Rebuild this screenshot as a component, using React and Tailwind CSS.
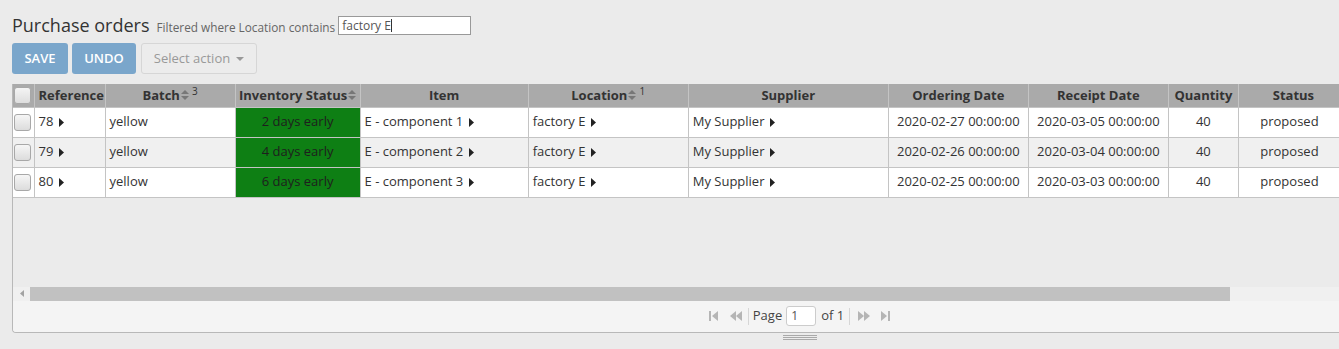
import React from 'react';

const cols = [
  { key: 'chk', w: 21 },
  { key: 'ref', label: 'Reference', w: 71, align: 'left' },
  { key: 'batch', label: 'Batch', w: 130, sort: '3' },
  { key: 'inv', label: 'Inventory Status', w: 125, sort: '' },
  { key: 'item', label: 'Item', w: 168 },
  { key: 'loc', label: 'Location', w: 160, sort: '1' },
  { key: 'sup', label: 'Supplier', w: 200 },
  { key: 'od', label: 'Ordering Date', w: 140 },
  { key: 'rd', label: 'Receipt Date', w: 140 },
  { key: 'qty', label: 'Quantity', w: 70 },
  { key: 'st', label: 'Status', w: 110 },
];

const rows = [
  { ref: '78', inv: '2 days early', item: 'E - component 1', od: '2020-02-27 00:00:00', rd: '2020-03-05 00:00:00' },
  { ref: '79', inv: '4 days early', item: 'E - component 2', od: '2020-02-26 00:00:00', rd: '2020-03-04 00:00:00' },
  { ref: '80', inv: '6 days early', item: 'E - component 3', od: '2020-02-25 00:00:00', rd: '2020-03-03 00:00:00' },
];

const Caret = () => (
  <svg width="5" height="9" viewBox="0 0 5 9" className="inline-block ml-[6px] align-[-1px]">
    <polygon points="0,0 5,4.5 0,9" fill="#222" />
  </svg>
);

const SortIcon = () => (
  <svg width="8" height="10" viewBox="0 0 8 10" className="inline-block ml-[1px] align-[0px]">
    <polygon points="0,4 4,0 8,4" fill="#777" />
    <polygon points="0,6 8,6 4,10" fill="#777" />
  </svg>
);

const Check = ({ light }) => (
  <div
    className={`w-[17px] h-[17px] rounded-[3px] border border-[#a8a8a8] ${
      light ? 'bg-gradient-to-b from-[#f4f4f4] to-[#dedede]' : 'bg-gradient-to-b from-[#f6f6f6] to-[#dcdcdc]'
    }`}
  />
);

const PagerIcon = ({ kind }) => {
  const c = '#b5b5b5';
  if (kind === 'first')
    return (
      <svg width="10" height="12" viewBox="0 0 10 12">
        <rect x="0" y="1" width="2" height="10" fill={c} />
        <polygon points="9,1 3,6 9,11" fill={c} />
      </svg>
    );
  if (kind === 'prev')
    return (
      <svg width="13" height="12" viewBox="0 0 13 12">
        <polygon points="6,1 0,6 6,11" fill={c} />
        <polygon points="12,1 6,6 12,11" fill={c} />
      </svg>
    );
  if (kind === 'next')
    return (
      <svg width="13" height="12" viewBox="0 0 13 12">
        <polygon points="1,1 7,6 1,11" fill={c} />
        <polygon points="7,1 13,6 7,11" fill={c} />
      </svg>
    );
  return (
    <svg width="10" height="12" viewBox="0 0 10 12">
      <polygon points="1,1 7,6 1,11" fill={c} />
      <rect x="8" y="1" width="2" height="10" fill={c} />
    </svg>
  );
};

export default function App() {
  return (
    <div
      className="w-[1339px] h-[349px] overflow-hidden bg-[#ebebeb] text-[#333]"
      style={{ fontFamily: '"Open Sans", "Liberation Sans", sans-serif' }}
    >
      {/* title */}
      <div className="flex items-end pl-[12px] pt-[11px] h-[36px]">
        <span className="text-[18px] leading-[22px] text-[#333]">Purchase orders</span>
        <span className="ml-[7px] text-[11.8px] leading-[18px] text-[#666]">Filtered where Location contains</span>
        <div className="ml-[3px] mb-[1px] w-[133px] h-[19px] bg-white border border-[#999] text-[12px] leading-[17px] pl-[3px] text-[#555]">
          factory E<span className="inline-block w-px h-[13px] bg-[#333] align-[-2px]" />
        </div>
      </div>

      {/* buttons */}
      <div className="flex pl-[12px] pt-[7px] gap-[4px]">
        <button className="w-[56px] h-[31px] rounded-[3px] bg-[#7aa6cb] text-white text-[13px] font-semibold">SAVE</button>
        <button className="w-[64px] h-[31px] rounded-[3px] bg-[#7aa6cb] text-white text-[13px] font-semibold">UNDO</button>
        <button className="ml-[1px] w-[116px] h-[31px] rounded-[3px] bg-[#ececec] border border-[#d6d6d6] text-[#999] text-[13px] flex items-center justify-center gap-[6px]">
          Select action
          <svg width="8" height="4" viewBox="0 0 8 4">
            <polygon points="0,0 8,0 4,4" fill="#999" />
          </svg>
        </button>
      </div>

      {/* grid */}
      <div className="ml-[12px] mt-[10px] w-[1576px] border-l border-b border-[#b8b8b8] rounded-bl-[4px] overflow-hidden">
        <table className="table-fixed border-collapse text-[13px]" style={{ width: 1336 }}>
          <colgroup>
            {cols.map((c) => (
              <col key={c.key} style={{ width: c.w }} />
            ))}
          </colgroup>
          <thead>
            <tr className="h-[23px] bg-[#aaaaaa]">
              {cols.map((c) => (
                <th
                  key={c.key}
                  className={`border-r border-[#c4c4c4] font-bold text-[#333] whitespace-nowrap overflow-hidden p-0 pt-[1px] ${
                    c.align === 'left' ? 'text-left pl-[4px]' : 'text-center'
                  }`}
                >
                  {c.key === 'chk' ? (
                    <div className="pl-[1px]">
                      <Check light />
                    </div>
                  ) : (
                    <>
                      {c.label}
                      {c.sort !== undefined && <SortIcon />}
                      {c.sort && <sup className="text-[10px] ml-[3px] font-normal">{c.sort}</sup>}
                    </>
                  )}
                </th>
              ))}
            </tr>
          </thead>
          <tbody>
            {rows.map((r, i) => (
              <tr key={r.ref} className={`h-[30px] ${i === 1 ? 'bg-[#f0f0f0]' : 'bg-white'}`}>
                <td className="border border-l-0 border-[#c4c4c4] p-0 pl-[1px]">
                  <Check />
                </td>
                <td className="border border-[#c4c4c4] px-[4px] whitespace-nowrap">
                  {r.ref}
                  <Caret />
                </td>
                <td className="border border-[#c4c4c4] px-[4px]">yellow</td>
                <td className="border border-[#c4c4c4] bg-[#0e7f14] text-center text-[#1e1e1e]">{r.inv}</td>
                <td className="border border-[#c4c4c4] px-[4px] whitespace-nowrap">
                  {r.item}
                  <Caret />
                </td>
                <td className="border border-[#c4c4c4] px-[4px] whitespace-nowrap">
                  factory E<Caret />
                </td>
                <td className="border border-[#c4c4c4] px-[4px] whitespace-nowrap">
                  My Supplier<Caret />
                </td>
                <td className="border border-[#c4c4c4] text-center whitespace-nowrap">{r.od}</td>
                <td className="border border-[#c4c4c4] text-center whitespace-nowrap">{r.rd}</td>
                <td className="border border-[#c4c4c4] text-center">40</td>
                <td className="border border-[#c4c4c4] text-center pr-[8px]">proposed</td>
              </tr>
            ))}
          </tbody>
        </table>

        {/* empty area */}
        <div className="h-[89px]" />

        {/* horizontal scrollbar */}
        <div className="h-[14px] flex bg-[#f0f0f0]">
          <div className="w-[17px] flex items-center justify-center">
            <svg width="4" height="7" viewBox="0 0 4 7">
              <polygon points="4,0 0,3.5 4,7" fill="#a3a3a3" />
            </svg>
          </div>
          <div className="w-[1200px] bg-[#c1c1c1]" />
        </div>

        {/* pager */}
        <div className="h-[31px] bg-[#f4f4f4] flex items-center justify-center pr-[2px] text-[13px]">
          <div className="flex items-center">
            <PagerIcon kind="first" />
            <span className="ml-[11px]"><PagerIcon kind="prev" /></span>
            <span className="ml-[5px] w-px h-[17px] bg-[#d6d6d6]" />
            <span className="ml-[4px] text-[#444]">Page</span>
            <div className="ml-[4px] w-[30px] h-[20px] bg-white border border-[#ccc] rounded-[3px] text-[12px] leading-[18px] pl-[4px] text-[#555]">1</div>
            <span className="ml-[5px] text-[#444]">of 1</span>
            <span className="ml-[5px] w-px h-[17px] bg-[#d6d6d6]" />
            <span className="ml-[7px]"><PagerIcon kind="next" /></span>
            <span className="ml-[10px]"><PagerIcon kind="last" /></span>
          </div>
        </div>
      </div>

      {/* resize grip */}
      <div className="ml-[12px] w-[1576px] flex justify-center pt-[2px]">
        <div className="w-[34px] flex flex-col gap-[1px]">
          <div className="h-px bg-[#a9a9a9]" />
          <div className="h-px bg-[#a9a9a9]" />
          <div className="h-px bg-[#a9a9a9]" />
        </div>
      </div>
    </div>
  );
}
